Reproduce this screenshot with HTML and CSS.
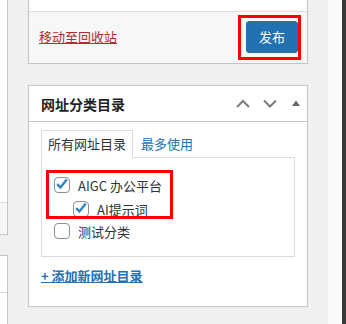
FILE: index.html
```html
<!DOCTYPE html>
<html lang="zh-CN">
<head>
<meta charset="utf-8">
<link rel="stylesheet" href="styles.css">
</head>
<body>
<div class="page">
  <div class="lcol">
    <div class="lbox1">
      <div class="lwhite"></div>
      <div class="lfoot"></div>
    </div>
    <div class="lbox2">
      <div class="lhead"></div>
    </div>
  </div>
  <div class="gap"></div>
  <div class="side">
    <div class="card publish">
      <div class="pub-top"></div>
      <div class="pub-foot">
        <a class="trash" href="#">移动至回收站</a>
        <button class="btn-primary" type="button">发布</button>
      </div>
    </div>
    <div class="card cats">
      <div class="card-head">
        <h2 class="card-title">网址分类目录</h2>
        <div class="handles">
          <svg class="ico chev" width="14" height="9" viewBox="0 0 14 9"><polyline points="1,8 7,2 13,8" fill="none" stroke="#787c82" stroke-width="2"/></svg>
          <svg class="ico chev" width="14" height="9" viewBox="0 0 14 9"><polyline points="1,1.5 7,7.5 13,1.5" fill="none" stroke="#787c82" stroke-width="2"/></svg>
          <svg class="ico tri" width="8" height="6" viewBox="0 0 8 6"><polygon points="0,6 4,0.5 8,6" fill="#646970"/></svg>
        </div>
      </div>
      <div class="card-body">
        <ul class="tabs">
          <li class="tab active">所有网址目录</li>
          <li class="tab"><a href="#">最多使用</a></li>
        </ul>
        <div class="panel">
          <ul class="checklist">
            <li>
              <label class="row"><span class="cb"><svg width="16" height="16" viewBox="0 0 16 16"><path d="M3.2 8.2 L6.4 11.4 L12.8 3.6" fill="none" stroke="#3582c4" stroke-width="2.4"/></svg></span>AIGC 办公平台</label>
              <ul class="children">
                <li><label class="row"><span class="cb"><svg width="16" height="16" viewBox="0 0 16 16"><path d="M3.2 8.2 L6.4 11.4 L12.8 3.6" fill="none" stroke="#3582c4" stroke-width="2.4"/></svg></span>AI提示词</label></li>
              </ul>
            </li>
            <li><label class="row"><span class="cb"></span>测试分类</label></li>
          </ul>
        </div>
        <a class="add-new" href="#">+ 添加新网址目录</a>
      </div>
    </div>
  </div>
  <div class="gap"></div>
  <div class="light"></div>
  <div class="dark"></div>
</div>
<div class="mark mark1"></div>
<div class="mark mark2"></div>
</body>
</html>
```

FILE: styles.css
```css
* { box-sizing: border-box; }
html, body { margin: 0; padding: 0; }
body {
  background: #f0f0f1;
  font-family: "Noto Sans CJK SC", "Noto Sans", sans-serif;
  font-size: 13px;
  color: #2c3338;
  width: 346px;
  height: 324px;
  overflow: hidden;
  position: relative;
}
.page {
  display: grid;
  grid-template-columns: 8px 20px 280px 20px 14px 4px;
  height: 324px;
}
.lcol { display: flex; flex-direction: column; }
.lbox1 {
  background: #fff;
  border-right: 1px solid #c3c4c7;
  border-bottom: 1px solid #c3c4c7;
}
.lwhite { height: 202px; }
.lfoot {
  height: 32px;
  background: #f6f7f7;
  border-top: 1px solid #dcdcde;
}
.lbox2 {
  margin-top: 20px;
  flex: 1;
  background: #fff;
  border-top: 1px solid #c3c4c7;
  border-right: 1px solid #c3c4c7;
}
.lhead { height: 37px; border-bottom: 1px solid #dcdcde; }
.light { background: #fafafa; }
.dark { background: #3a3a3a; }

.side { display: flex; flex-direction: column; }
.card {
  background: #fff;
  border: 1px solid #c3c4c7;
}
.publish { border-top: none; margin-bottom: 21px; }
.pub-top { height: 11px; }
.pub-foot {
  height: 52px;
  background: #f6f7f7;
  border-top: 1px solid #dcdcde;
  display: flex;
  align-items: center;
  justify-content: space-between;
  padding: 0 9px 1px 10px;
}
.trash {
  color: #b32d2e;
  text-decoration: underline;
  font-size: 13px;
  line-height: 20px;
}
.btn-primary {
  font-family: inherit;
  font-size: 13px;
  height: 32px;
  line-height: 30px;
  padding: 0 12px;
  background: #2271b1;
  border: 1px solid #2271b1;
  border-radius: 3px;
  color: #fff;
}
.card-head {
  height: 36px;
  border-bottom: 1px solid #c3c4c7;
  display: flex;
  align-items: center;
  justify-content: space-between;
  padding: 0 7px 0 12px;
}
.card-title {
  margin: 0;
  font-size: 14px;
  font-weight: 700;
  color: #1d2327;
  line-height: 20px;
}
.handles { display: flex; align-items: center; }
.ico { display: block; }
.chev + .chev { margin-left: 13px; }
.tri { margin-left: 15px; margin-top: -2px; }
.card-body { padding: 8px 12px 20px 12px; }
.tabs {
  list-style: none;
  margin: 0;
  padding: 0;
  display: flex;
}
.tab {
  line-height: 26px;
  padding: 0 6px;
  border: 1px solid transparent;
  border-bottom: none;
}
.tab.active {
  border-color: #dcdcde;
  background: #fff;
  border-bottom: 1px solid #fff;
  margin-bottom: -1px;
  position: relative;
  color: #2c3338;
}
.tab a { color: #2271b1; text-decoration: none; padding-left: 1px; }
.panel {
  border: 1px solid #dcdcde;
  padding: 16px 12px 14px 12px;
}
.checklist, .children { list-style: none; margin: 0; padding: 0; }
.children { margin: 2px 0 0 19px; }
.row {
  display: flex;
  align-items: center;
  height: 22px;
  color: #2c3338;
}
.cb {
  width: 16px;
  height: 16px;
  border: 1px solid #8c8f94;
  border-radius: 4px;
  background: #fff;
  margin-right: 8px;
  position: relative;
  flex: none;
}
.cb svg { display: block; margin: -2px 0 0 -1px; }
.add-new {
  display: block;
  margin-top: 9px;
  color: #2271b1;
  font-weight: 700;
  text-decoration: underline;
  line-height: 20px;
}
.mark {
  position: absolute;
  border: 3px solid #ff0000;
}
.mark1 { left: 238px; top: 15px; width: 63px; height: 45px; }
.mark2 { left: 46px; top: 170px; width: 127px; height: 49px; }
```
